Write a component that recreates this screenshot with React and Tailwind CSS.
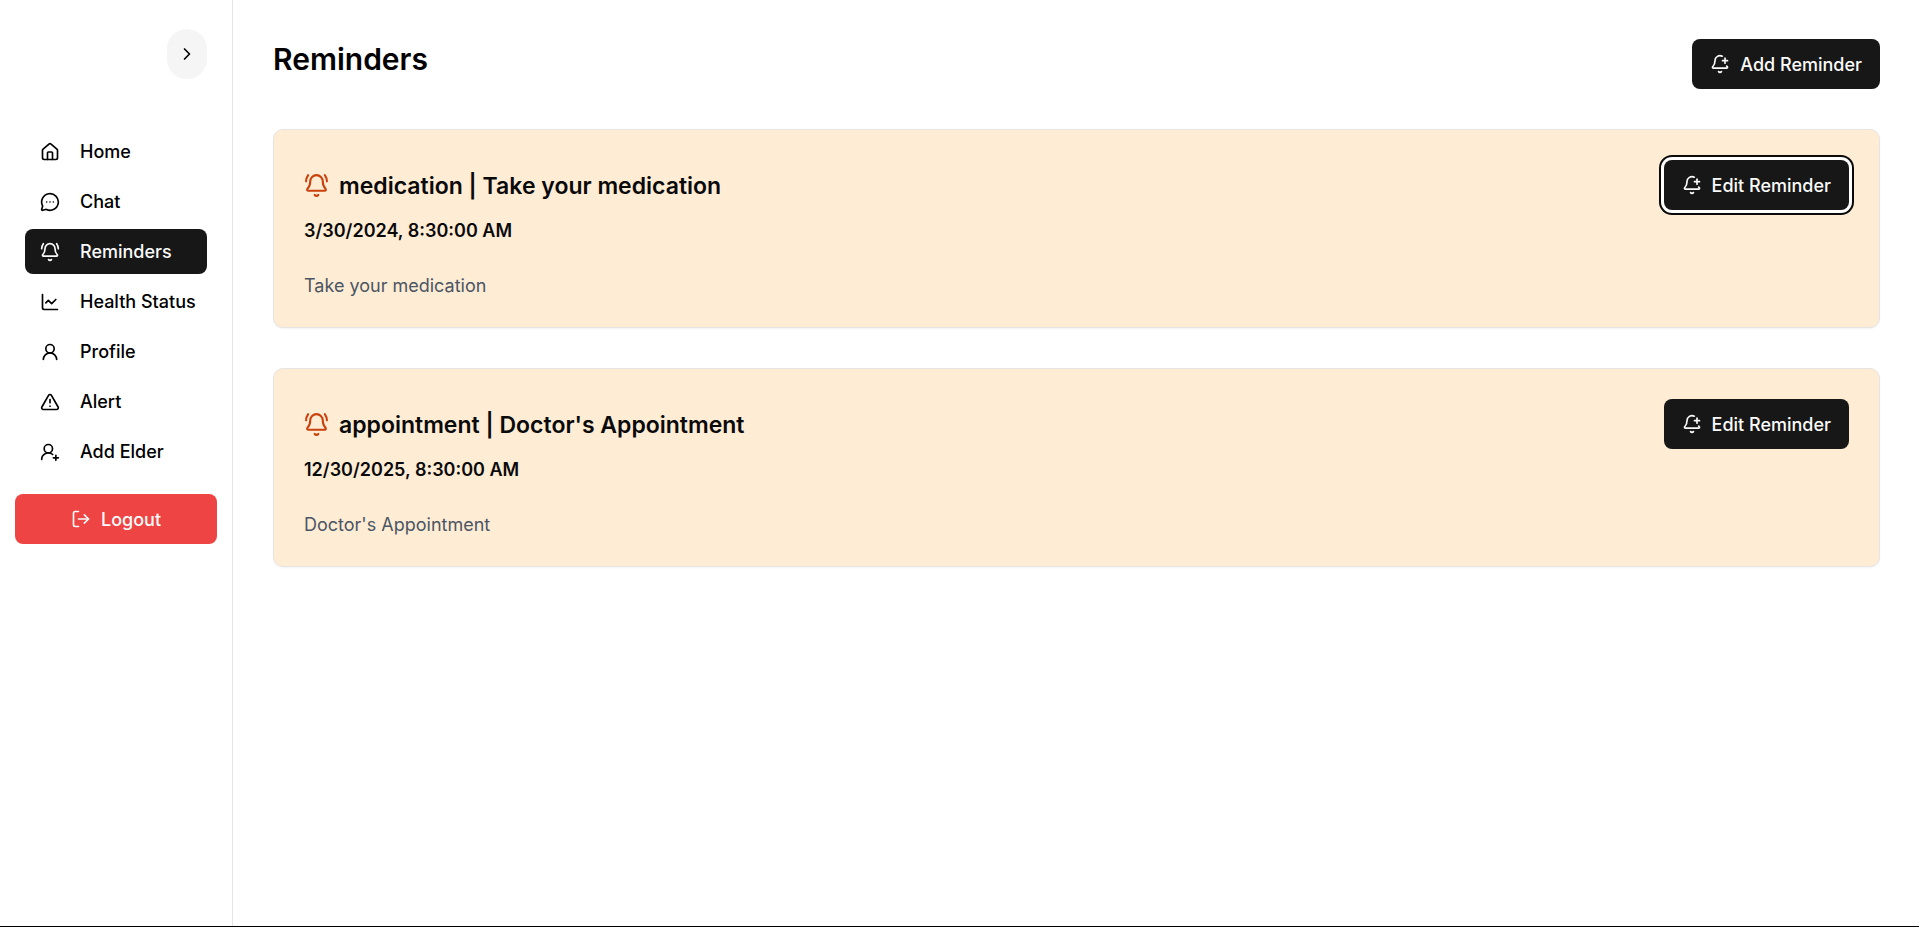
import { useEffect, useRef } from "react";
import {
  BellPlus,
  BellRing,
  ChevronRight,
  House,
  LogOut,
  MessageCircleMore,
  ChartLine,
  TriangleAlert,
  UserRound,
  UserRoundPlus,
} from "lucide-react";

const navItems = [
  { label: "Home", icon: House },
  { label: "Chat", icon: MessageCircleMore },
  { label: "Reminders", icon: BellRing, active: true },
  { label: "Health Status", icon: ChartLine },
  { label: "Profile", icon: UserRound },
  { label: "Alert", icon: TriangleAlert },
  { label: "Add Elder", icon: UserRoundPlus },
];

const reminders = [
  {
    type: "medication",
    title: "Take your medication",
    time: "3/30/2024, 8:30:00 AM",
    description: "Take your medication",
    focused: true,
  },
  {
    type: "appointment",
    title: "Doctor's Appointment",
    time: "12/30/2025, 8:30:00 AM",
    description: "Doctor's Appointment",
  },
];

function ActionButton({ children, focused }) {
  const ref = useRef(null);
  useEffect(() => {
    if (focused) ref.current.focus();
  }, [focused]);
  return (
    <button
      ref={ref}
      type="button"
      className="flex h-[50px] shrink-0 items-center gap-2.5 rounded-lg bg-neutral-900 px-[18px] font-medium text-neutral-50 outline-none focus:ring-2 focus:ring-neutral-950 focus:ring-offset-3"
    >
      <BellPlus size={20} />
      {children}
    </button>
  );
}

function Sidebar() {
  return (
    <aside className="flex w-[233px] shrink-0 flex-col border-r border-neutral-200">
      <div className="flex justify-end px-[25px] pt-[29px]">
        <button
          type="button"
          aria-label="Expand sidebar"
          className="flex h-[50px] w-10 items-center justify-center rounded-full bg-neutral-100"
        >
          <ChevronRight size={20} />
        </button>
      </div>
      <nav className="mt-[50px] flex flex-col gap-[5px] px-[25px]">
        {navItems.map(({ label, icon: Icon, active }) => (
          <a
            key={label}
            href="#"
            className={
              active
                ? "flex h-[45px] items-center gap-5 rounded-lg bg-neutral-900 px-[15px] font-medium whitespace-nowrap text-neutral-50"
                : "flex h-[45px] items-center gap-5 rounded-lg px-[15px] font-medium whitespace-nowrap"
            }
          >
            <Icon size={20} className="shrink-0" />
            {label}
          </a>
        ))}
      </nav>
      <div className="px-[15px] pt-5">
        <button
          type="button"
          className="flex h-[50px] w-full items-center justify-center gap-2.5 rounded-lg bg-[#ef4444] font-medium text-neutral-50"
        >
          <LogOut size={20} />
          Logout
        </button>
      </div>
    </aside>
  );
}

function ReminderCard({ reminder }) {
  return (
    <article className="flex items-start justify-between rounded-[10px] border border-[#e5e5e5] bg-[#ffecd5] px-[30px] pt-[30px] pb-[26px] text-neutral-950 shadow-xs">
      <div className="pt-2.5">
        <h2 className="flex items-center gap-2.5 text-[23px] leading-8 font-semibold">
          <BellRing size={25} className="mb-0.5 text-[#c9420d]" />
          {reminder.type} | {reminder.title}
        </h2>
        <p className="mt-3.5 leading-[30px] font-semibold">{reminder.time}</p>
        <p className="mt-[25px] leading-[30px] text-[#4b5563]">{reminder.description}</p>
      </div>
      <ActionButton focused={reminder.focused}>Edit Reminder</ActionButton>
    </article>
  );
}

export default function App() {
  return (
    <div className="flex min-h-screen border-b border-black bg-white font-['Inter',sans-serif] text-[18px] text-black">
      <Sidebar />
      <main className="flex min-w-0 flex-1 flex-col gap-10 pt-[39px] pr-[39px] pl-10">
        <header className="flex items-start justify-between">
          <h1 className="text-[30px] leading-10 font-semibold">Reminders</h1>
          <ActionButton>Add Reminder</ActionButton>
        </header>
        {reminders.map((reminder) => (
          <ReminderCard key={reminder.time} reminder={reminder} />
        ))}
      </main>
    </div>
  );
}
